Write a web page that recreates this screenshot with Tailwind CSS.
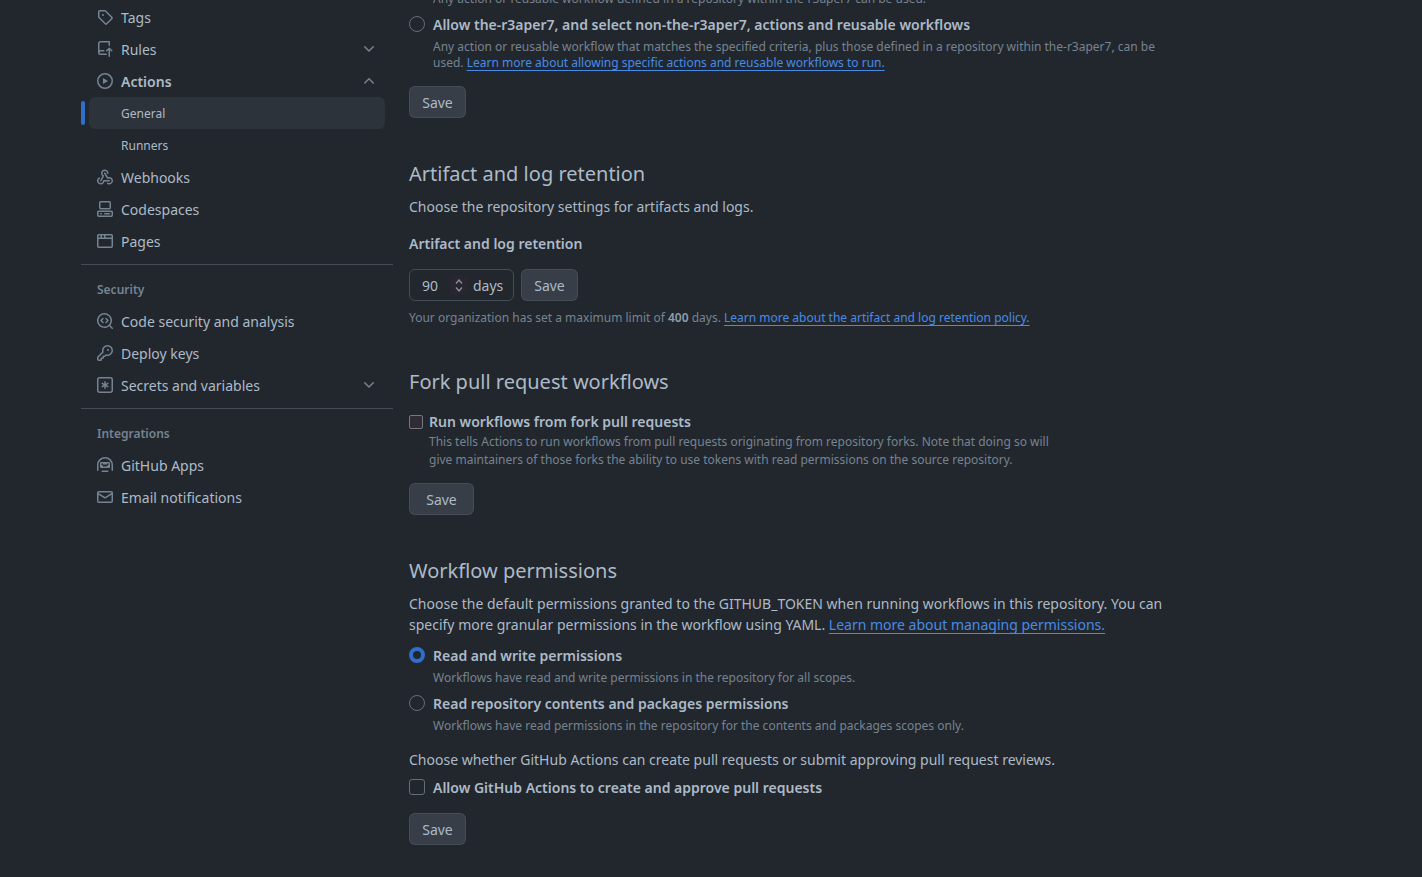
<!DOCTYPE html>
<html lang="en">

<head>
  <meta charset="UTF-8" />
  <meta name="viewport" content="width=device-width, initial-scale=1.0" />
  <title>Actions settings</title>
  <script src="https://cdn.jsdelivr.net/npm/@tailwindcss/browser@4"></script>
</head>

<body class="bg-[#22272e] text-[#adbac7] font-['Noto_Sans',sans-serif] text-sm h-screen overflow-hidden">
  <div class="flex pl-[81px] h-screen overflow-hidden">

    <!-- Sidebar -->
    <nav class="w-[312px] shrink-0 pt-px">
      <div class="px-2">
        <a class="flex items-center h-8 px-2 gap-2 leading-5">
          <svg class="w-4 h-4 fill-[#768390]" viewBox="0 0 16 16"><path d="M1 7.775V2.75C1 1.784 1.784 1 2.75 1h5.025c.464 0 .91.184 1.238.513l6.25 6.25a1.75 1.75 0 0 1 0 2.474l-5.026 5.026a1.75 1.75 0 0 1-2.474 0l-6.25-6.25A1.752 1.752 0 0 1 1 7.775Zm1.5 0c0 .066.026.13.073.177l6.25 6.25a.25.25 0 0 0 .354 0l5.025-5.025a.25.25 0 0 0 0-.354l-6.25-6.25a.25.25 0 0 0-.177-.073H2.75a.25.25 0 0 0-.25.25ZM6 5a1 1 0 1 1 0 2 1 1 0 0 1 0-2Z"/></svg>
          <span class="mt-0.5">Tags</span>
        </a>
        <a class="flex items-center h-8 px-2 gap-2 leading-5">
          <svg class="w-4 h-4 fill-[#768390]" viewBox="0 0 16 16"><path d="M1 2.5A2.5 2.5 0 0 1 3.5 0h8.75a.75.75 0 0 1 .75.75v3.5a.75.75 0 0 1-1.5 0V1.5h-8a1 1 0 0 0-1 1v6.708A2.493 2.493 0 0 1 3.5 9h3.25a.75.75 0 0 1 0 1.5H3.5a1 1 0 0 0 0 2h5.75a.75.75 0 0 1 0 1.5H3.5A2.5 2.5 0 0 1 1 11.5Zm13.23 7.79h-.001l-1.224-1.224v6.184a.75.75 0 0 1-1.5 0V9.066L10.28 10.29a.75.75 0 0 1-1.06-1.061l2.505-2.504a.75.75 0 0 1 1.06 0L15.29 9.23a.751.751 0 0 1-.018 1.042.751.751 0 0 1-1.042.018Z"/></svg>
          <span class="mt-0.5">Rules</span>
          <svg class="w-4 h-4 fill-[#768390] ml-auto" viewBox="0 0 16 16"><path d="M12.78 5.22a.749.749 0 0 1 0 1.06l-4.25 4.25a.749.749 0 0 1-1.06 0L3.22 6.28a.749.749 0 1 1 1.06-1.06L8 8.939l3.72-3.719a.749.749 0 0 1 1.06 0Z"/></svg>
        </a>
        <a class="flex items-center h-8 px-2 gap-2 leading-5">
          <svg class="w-4 h-4 fill-[#768390]" viewBox="0 0 16 16"><path d="M8 0a8 8 0 1 1 0 16A8 8 0 0 1 8 0ZM1.5 8a6.5 6.5 0 1 0 13 0 6.5 6.5 0 0 0-13 0Zm4.879-2.773 4.264 2.559a.25.25 0 0 1 0 .428l-4.264 2.559A.25.25 0 0 1 6 10.559V5.442a.25.25 0 0 1 .379-.215Z"/></svg>
          <span class="mt-0.5 font-semibold">Actions</span>
          <svg class="w-4 h-4 fill-[#768390] ml-auto" viewBox="0 0 16 16"><path d="M3.22 10.53a.749.749 0 0 1 0-1.06l4.25-4.25a.749.749 0 0 1 1.06 0l4.25 4.25a.749.749 0 1 1-1.06 1.06L8 6.811 4.28 10.53a.749.749 0 0 1-1.06 0Z"/></svg>
        </a>
        <div class="relative">
          <span class="absolute -left-2 top-1 w-1 h-6 rounded-md bg-[#316dca]"></span>
          <a class="flex items-center h-8 pl-8 pt-0.5 rounded-md bg-[#2d333b] text-xs">General</a>
        </div>
        <a class="flex items-center h-8 pl-8 pt-0.5 text-xs">Runners</a>
        <a class="flex items-center h-8 px-2 gap-2 leading-5">
          <svg class="w-4 h-4 fill-[#768390]" viewBox="0 0 16 16"><path d="M5.5 4.25a2.25 2.25 0 0 1 4.5 0 .75.75 0 0 0 1.5 0 3.75 3.75 0 1 0-6.14 2.889l-2.272 4.258a.75.75 0 0 0 1.324.706L7 7.25a.75.75 0 0 0-.309-1.015A2.25 2.25 0 0 1 5.5 4.25Z"/><path d="M7.364 3.607a.75.75 0 0 1 1.03.257l2.608 4.349a3.75 3.75 0 1 1-.628 6.785.75.75 0 0 1 .752-1.299 2.25 2.25 0 1 0-.033-3.88.75.75 0 0 1-1.03-.256L7.107 4.636a.75.75 0 0 1 .257-1.03Z"/><path d="M2.9 8.776A.75.75 0 0 1 2.625 9.8 2.25 2.25 0 1 0 6 11.75a.75.75 0 0 1 .75-.751h5.5a.75.75 0 0 1 0 1.5H7.425a3.751 3.751 0 1 1-5.55-3.998.75.75 0 0 1 1.024.274Z"/></svg>
          <span class="mt-0.5">Webhooks</span>
        </a>
        <a class="flex items-center h-8 px-2 gap-2 leading-5">
          <svg class="w-4 h-4 fill-[#768390]" viewBox="0 0 16 16"><path d="M0 11.25c0-.966.784-1.75 1.75-1.75h12.5c.966 0 1.75.784 1.75 1.75v3A1.75 1.75 0 0 1 14.25 16H1.75A1.75 1.75 0 0 1 0 14.25Zm2-9.5C2 .784 2.784 0 3.75 0h8.5C13.216 0 14 .784 14 1.75v5a1.75 1.75 0 0 1-1.75 1.75h-8.5A1.75 1.75 0 0 1 2 6.75Zm1.75-.25a.25.25 0 0 0-.25.25v5c0 .138.112.25.25.25h8.5a.25.25 0 0 0 .25-.25v-5a.25.25 0 0 0-.25-.25Zm-2 9.5a.25.25 0 0 0-.25.25v3c0 .138.112.25.25.25h12.5a.25.25 0 0 0 .25-.25v-3a.25.25 0 0 0-.25-.25Z"/><path d="M7 12.75a.75.75 0 0 1 .75-.75h4.5a.75.75 0 0 1 0 1.5h-4.5a.75.75 0 0 1-.75-.75Zm-4 0a.75.75 0 0 1 .75-.75h.5a.75.75 0 0 1 0 1.5h-.5a.75.75 0 0 1-.75-.75Z"/></svg>
          <span class="mt-0.5">Codespaces</span>
        </a>
        <a class="flex items-center h-8 px-2 gap-2 leading-5">
          <svg class="w-4 h-4 fill-[#768390]" viewBox="0 0 16 16"><path d="M0 2.75C0 1.784.784 1 1.75 1h12.5c.966 0 1.75.784 1.75 1.75v10.5A1.75 1.75 0 0 1 14.25 15H1.75A1.75 1.75 0 0 1 0 13.25ZM14.5 6h-13v7.25c0 .138.112.25.25.25h12.5a.25.25 0 0 0 .25-.25Zm-6-3.5v2h6V2.75a.25.25 0 0 0-.25-.25ZM5 2.5v2h2v-2Zm-3.25 0a.25.25 0 0 0-.25.25V4.5h2v-2Z"/></svg>
          <span class="mt-0.5">Pages</span>
        </a>
      </div>

      <div class="mt-[7px] border-t border-[#444c56]"></div>

      <div class="px-2">
        <h3 class="mt-[15px] mb-[5px] px-2 text-xs leading-5 font-semibold text-[#768390]">Security</h3>
        <a class="flex items-center h-8 px-2 gap-2 leading-5">
          <svg class="w-4 h-4 fill-[#768390]" viewBox="0 0 16 16"><path d="M8.47 4.97a.75.75 0 0 0 0 1.06L9.94 7.5 8.47 8.97a.75.75 0 1 0 1.06 1.06l2-2a.75.75 0 0 0 0-1.06l-2-2a.75.75 0 0 0-1.06 0ZM6.53 6.03a.75.75 0 0 0-1.06-1.06l-2 2a.75.75 0 0 0 0 1.06l2 2a.75.75 0 1 0 1.06-1.06L5.06 7.5l1.47-1.47Z"/><path d="M12.246 13.307a7.501 7.501 0 1 1 1.06-1.06l2.474 2.473a.749.749 0 0 1-.326 1.275.749.749 0 0 1-.734-.215ZM1.5 7.5a6.002 6.002 0 0 0 3.608 5.504 6.002 6.002 0 0 0 6.486-1.117.748.748 0 0 1 .292-.293A6 6 0 1 0 1.5 7.5Z"/></svg>
          <span class="mt-0.5">Code security and analysis</span>
        </a>
        <a class="flex items-center h-8 px-2 gap-2 leading-5">
          <svg class="w-4 h-4 fill-[#768390]" viewBox="0 0 16 16"><path d="M10.5 0a5.499 5.499 0 1 1-1.288 10.848l-.932.932a.749.749 0 0 1-.53.22H7v.75a.749.749 0 0 1-.22.53l-.5.5a.749.749 0 0 1-.53.22H5v.75a.749.749 0 0 1-.22.53l-.5.5a.749.749 0 0 1-.53.22h-2A1.75 1.75 0 0 1 0 14.25v-2c0-.199.079-.389.22-.53l4.932-4.932A5.5 5.5 0 0 1 10.5 0Zm-4 5.5c-.001.431.069.86.205 1.269a.75.75 0 0 1-.181.768L1.5 12.56v1.69c0 .138.112.25.25.25h1.69l.06-.06v-1.19a.75.75 0 0 1 .75-.75h1.19l.06-.06v-1.19a.75.75 0 0 1 .75-.75h1.19l1.023-1.025a.75.75 0 0 1 .768-.18A4 4 0 1 0 6.5 5.5ZM11 6a1 1 0 1 1 0-2 1 1 0 0 1 0 2Z"/></svg>
          <span class="mt-0.5">Deploy keys</span>
        </a>
        <a class="flex items-center h-8 px-2 gap-2 leading-5">
          <svg class="w-4 h-4 fill-[#768390]" viewBox="0 0 16 16"><path d="M0 2.75A2.75 2.75 0 0 1 2.75 0h10.5A2.75 2.75 0 0 1 16 2.75v10.5A2.75 2.75 0 0 1 13.25 16H2.75A2.75 2.75 0 0 1 0 13.25ZM2.75 1.5c-.69 0-1.25.56-1.25 1.25v10.5c0 .69.56 1.25 1.25 1.25h10.5c.69 0 1.25-.56 1.25-1.25V2.75c0-.69-.56-1.25-1.25-1.25Z"/><path d="M8 4a.75.75 0 0 1 .75.75V6.7l1.69-.975a.75.75 0 0 1 .75 1.3L9.5 8l1.69.976a.75.75 0 0 1-.75 1.298L8.75 9.3v1.951a.75.75 0 0 1-1.5 0V9.299l-1.69.976a.75.75 0 0 1-.75-1.3L6.5 8l-1.69-.975a.75.75 0 0 1 .75-1.3l1.69.976V4.75A.75.75 0 0 1 8 4Z"/></svg>
          <span class="mt-0.5">Secrets and variables</span>
          <svg class="w-4 h-4 fill-[#768390] ml-auto" viewBox="0 0 16 16"><path d="M12.78 5.22a.749.749 0 0 1 0 1.06l-4.25 4.25a.749.749 0 0 1-1.06 0L3.22 6.28a.749.749 0 1 1 1.06-1.06L8 8.939l3.72-3.719a.749.749 0 0 1 1.06 0Z"/></svg>
        </a>
      </div>

      <div class="mt-[7px] border-t border-[#444c56]"></div>

      <div class="px-2">
        <h3 class="mt-[15px] mb-[5px] px-2 text-xs leading-5 font-semibold text-[#768390]">Integrations</h3>
        <a class="flex items-center h-8 px-2 gap-2 leading-5">
          <svg class="w-4 h-4 fill-[#768390]" viewBox="0 0 16 16"><path d="M0 8a8 8 0 0 1 16 0v5.25a.75.75 0 0 1-1.5 0V8a6.5 6.5 0 1 0-13 0v5.25a.75.75 0 0 1-1.5 0Zm3-1.75C3 5.56 3.56 5 4.25 5h7.5c.69 0 1.25.56 1.25 1.25v3.5c0 .69-.56 1.25-1.25 1.25h-7.5C3.56 11 3 10.44 3 9.75Zm1.47 1.28 2 2a.75.75 0 0 0 1.06 0L8 9.06l.47.47a.75.75 0 0 0 1.06 0l2-2a.749.749 0 0 0-.326-1.275.749.749 0 0 0-.734.215L9 7.94l-.47-.47a.75.75 0 0 0-1.06 0L7 7.94 5.53 6.47a.75.75 0 0 0-1.06 1.06ZM5.25 13.5h5.5a.75.75 0 0 1 0 1.5h-5.5a.75.75 0 0 1 0-1.5Z"/></svg>
          <span class="mt-0.5">GitHub Apps</span>
        </a>
        <a class="flex items-center h-8 px-2 gap-2 leading-5">
          <svg class="w-4 h-4 fill-[#768390]" viewBox="0 0 16 16"><path d="M1.75 2h12.5c.966 0 1.75.784 1.75 1.75v8.5A1.75 1.75 0 0 1 14.25 14H1.75A1.75 1.75 0 0 1 0 12.25v-8.5C0 2.784.784 2 1.75 2ZM1.5 12.251c0 .138.112.25.25.25h12.5a.25.25 0 0 0 .25-.25V5.809L8.38 9.397a.75.75 0 0 1-.76 0L1.5 5.809v6.442Zm13-8.181v-.32a.25.25 0 0 0-.25-.25H1.75a.25.25 0 0 0-.25.25v.32L8 7.88Z"/></svg>
          <span class="mt-0.5">Email notifications</span>
        </a>
      </div>
    </nav>

    <!-- Main settings column -->
    <main class="ml-4 w-[768px] shrink-0 -mt-[9px]">
      <p class="pl-6 text-xs leading-4 text-[#768390]">Any action or reusable workflow defined in a repository within the-r3aper7 can be used.</p>

      <label class="mt-[7px] flex items-center gap-2 h-5 font-semibold">
        <span class="w-4 h-4 rounded-full border border-[#636e7b]"></span>
        <span class="mt-0.5">Allow the-r3aper7, and select non-the-r3aper7, actions and reusable workflows</span>
      </label>
      <p class="mt-[5px] pl-6 text-xs leading-4 text-[#768390]">
        Any action or reusable workflow that matches the specified criteria, plus those defined in a repository within the-r3aper7, can be used.
        <a class="text-[#478be6] underline underline-offset-[3px] [text-decoration-skip-ink:none]">Learn more about allowing specific actions and reusable workflows to run.</a>
      </p>
      <button class="mt-[15px] block h-8 w-[57px] pt-0.5 rounded-md border border-[#cdd9e5]/10 bg-[#373e47]">Save</button>

      <h2 class="mt-[41px] text-xl leading-[30px]">Artifact and log retention</h2>
      <p class="mt-[7px] leading-[21px]">Choose the repository settings for artifacts and logs.</p>
      <h4 class="mt-[17px] leading-5 font-semibold">Artifact and log retention</h4>
      <div class="mt-[15px] flex gap-[7px]">
        <div class="flex items-center h-8 w-[105px] rounded-md border border-[#444c56] pl-3">
          <span class="mt-0.5 w-7">90</span>
          <span class="flex flex-col items-center justify-center gap-[3px] w-[18px] h-[18px] bg-[#2a2630]">
            <svg class="w-2 h-[5px] stroke-[#8b929c] stroke-[1.3] fill-none" viewBox="0 0 8 5"><path d="M1 4.5l3-3.5 3 3.5"/></svg>
            <svg class="w-2 h-[5px] stroke-[#8b929c] stroke-[1.3] fill-none" viewBox="0 0 8 5"><path d="M1 .5l3 3.5 3-3.5"/></svg>
          </span>
          <span class="mt-0.5 ml-[5px]">days</span>
        </div>
        <button class="h-8 w-[57px] pt-0.5 rounded-md border border-[#cdd9e5]/10 bg-[#373e47]">Save</button>
      </div>
      <p class="mt-[9px] text-xs leading-4 text-[#768390]">
        Your organization has set a maximum limit of <b class="font-semibold text-[#909dab]">400</b> days.
        <a class="text-[#478be6] underline underline-offset-[3px] [text-decoration-skip-ink:none]">Learn more about the artifact and log retention policy.</a>
      </p>

      <h2 class="mt-[41px] text-xl leading-[30px]">Fork pull request workflows</h2>
      <label class="mt-[15px] flex items-center gap-1.5 h-5 font-semibold">
        <span class="w-3.5 h-3.5 rounded-[2px] border-[1.5px] border-[#77777f] bg-[#2f2c35]"></span>
        <span>Run workflows from fork pull requests</span>
      </label>
      <p class="mt-px pl-5 w-[660px] text-xs leading-[18px] text-[#768390]">
        This tells Actions to run workflows from pull requests originating from repository forks. Note that doing so will give maintainers of those forks the ability to use tokens with read permissions on the source repository.
      </p>
      <button class="mt-[14px] block h-8 w-[65px] pt-0.5 rounded-md border border-[#cdd9e5]/10 bg-[#373e47]">Save</button>

      <h2 class="mt-[41px] text-xl leading-[30px]">Workflow permissions</h2>
      <p class="mt-[7px] leading-[21px]">
        Choose the default permissions granted to the GITHUB_TOKEN when running workflows in this repository. You can specify more granular permissions in the workflow using YAML.
        <a class="text-[#478be6] underline underline-offset-[3px] [text-decoration-skip-ink:none]">Learn more about managing permissions.</a>
      </p>
      <label class="mt-[10px] flex items-center gap-2 h-5 font-semibold">
        <span class="w-4 h-4 rounded-full border-4 border-[#316dca]"></span>
        <span class="mt-0.5">Read and write permissions</span>
      </label>
      <p class="mt-[5px] pl-6 text-xs leading-4 text-[#768390]">Workflows have read and write permissions in the repository for all scopes.</p>
      <label class="mt-[7px] flex items-center gap-2 h-5 font-semibold">
        <span class="w-4 h-4 rounded-full border border-[#636e7b]"></span>
        <span class="mt-0.5">Read repository contents and packages permissions</span>
      </label>
      <p class="mt-[5px] pl-6 text-xs leading-4 text-[#768390]">Workflows have read permissions in the repository for the contents and packages scopes only.</p>
      <p class="mt-[15px] leading-[21px]">Choose whether GitHub Actions can create pull requests or submit approving pull request reviews.</p>
      <label class="mt-[7px] flex items-center gap-2 h-5 font-semibold">
        <span class="w-4 h-4 rounded-[3px] border border-[#636e7b]"></span>
        <span class="mt-0.5">Allow GitHub Actions to create and approve pull requests</span>
      </label>
      <button class="mt-4 block h-8 w-[57px] pt-0.5 rounded-md border border-[#cdd9e5]/10 bg-[#373e47]">Save</button>
    </main>
  </div>
</body>

</html>
